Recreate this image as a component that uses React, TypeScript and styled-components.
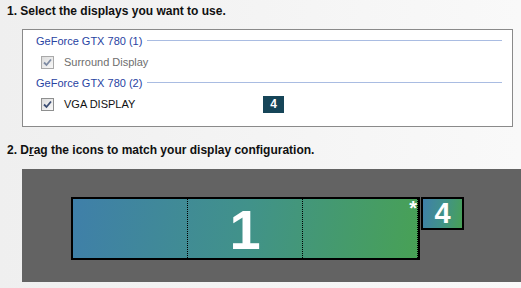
import React from "react";
import styled, { createGlobalStyle } from "styled-components";

const GlobalStyle = createGlobalStyle`
  html, body {
    margin: 0;
    padding: 0;
  }
  body {
    width: 521px;
    height: 288px;
    overflow: hidden;
    background: linear-gradient(to right, #efefef, #f9f9f9);
    font-family: "Liberation Sans", Arial, sans-serif;
  }
`;

const Page = styled.div`
  display: flex;
  flex-direction: column;
  padding-top: 4px;
`;

const StepTitle = styled.h2<{ $gap?: number }>`
  margin: ${({ $gap }) => $gap ?? 0}px 0 0 0;
  padding-left: 7px;
  height: 14px;
  line-height: 14px;
  font-size: 12px;
  font-weight: 700;
  color: #101010;
  u {
    text-decoration: underline;
    text-underline-offset: 1px;
  }
`;

const GroupBox = styled.div`
  margin: 11px 0 0 22px;
  width: 491px;
  height: 98px;
  background: #fff;
  border: 1px solid #8a8a8a;
  display: flex;
  flex-direction: column;
  padding: 3px 10px 0 13px;
  box-sizing: border-box;
`;

const GroupHeader = styled.div`
  display: flex;
  align-items: center;
  gap: 5px;
  height: 15px;
  font-size: 11px;
  color: #2843a2;
  &::after {
    content: "";
    flex: 1;
    height: 1px;
    background: #a9bce2;
  }
`;

const CheckRow = styled.div`
  display: grid;
  grid-template-columns: 18px 204px auto;
  align-items: center;
  height: 18px;
  margin: 5px 0 4px 5px;
`;

const Box = styled.span<{ $disabled?: boolean }>`
  width: 13px;
  height: 13px;
  box-sizing: border-box;
  border: 1px solid ${({ $disabled }) => ($disabled ? "#a9a9a9" : "#8e8f8f")};
  background: linear-gradient(135deg, #dcdcdc, #f8f8f8);
  display: flex;
  align-items: center;
  justify-content: center;
`;

const Label = styled.span<{ $disabled?: boolean }>`
  font-size: 11px;
  color: ${({ $disabled }) => ($disabled ? "#6e6e6e" : "#111")};
  padding-left: 5px;
`;

const Badge = styled.span`
  width: 21px;
  height: 17px;
  background: #164558;
  color: #fff;
  font-weight: 700;
  font-size: 12px;
  display: flex;
  align-items: center;
  justify-content: center;
`;

const Canvas = styled.div`
  position: relative;
  margin: 12px 0 0 22px;
  height: 113px;
  background: #636363;
`;

const Display = styled.div<{ $left: number; $w: number; $h: number }>`
  position: absolute;
  top: 28px;
  left: ${({ $left }) => $left}px;
  width: ${({ $w }) => $w}px;
  height: ${({ $h }) => $h}px;
  box-sizing: border-box;
  border: 2px solid #000;
  background: linear-gradient(100deg, #3f7fa9 0%, #41928a 50%, #48a155 100%);
  color: #fff;
  font-weight: 700;
  display: flex;
`;

const Segment = styled.div`
  flex: 1;
  border-right: 1px dotted #000;
  &:last-child {
    border-right: none;
  }
  display: flex;
  align-items: center;
  justify-content: center;
`;

const BigNumber = styled.span`
  font-size: 56px;
  line-height: 1;
  margin-top: 2px;
`;

const Primary = styled.span`
  position: absolute;
  top: 2px;
  right: 1px;
  font-size: 20px;
  line-height: 14px;
`;

const SmallNumber = styled.span`
  margin: auto;
  font-size: 29px;
  line-height: 1;
`;

const Check = ({ disabled }: { disabled?: boolean }) => (
  <Box $disabled={disabled}>
    <svg width="9" height="9" viewBox="0 0 9 9">
      <path
        d="M1 4.5 L3.5 7 L8 1.5"
        fill="none"
        stroke={disabled ? "#7e8ba3" : "#3b4d73"}
        strokeWidth="1.8"
      />
    </svg>
  </Box>
);

export default function App() {
  return (
    <Page>
      <GlobalStyle />
      <StepTitle>1. Select the displays you want to use.</StepTitle>
      <GroupBox>
        <GroupHeader>GeForce GTX 780 (1)</GroupHeader>
        <CheckRow>
          <Check disabled />
          <Label $disabled>Surround Display</Label>
        </CheckRow>
        <GroupHeader>GeForce GTX 780 (2)</GroupHeader>
        <CheckRow>
          <Check />
          <Label>VGA DISPLAY</Label>
          <Badge>4</Badge>
        </CheckRow>
      </GroupBox>
      <StepTitle $gap={16}>
        2. D<u>r</u>ag the icons to match your display configuration.
      </StepTitle>
      <Canvas>
        <Display $left={49} $w={349} $h={63}>
          <Segment />
          <Segment>
            <BigNumber>1</BigNumber>
          </Segment>
          <Segment />
          <Primary>*</Primary>
        </Display>
        <Display $left={399} $w={43} $h={33}>
          <SmallNumber>4</SmallNumber>
        </Display>
      </Canvas>
    </Page>
  );
}
